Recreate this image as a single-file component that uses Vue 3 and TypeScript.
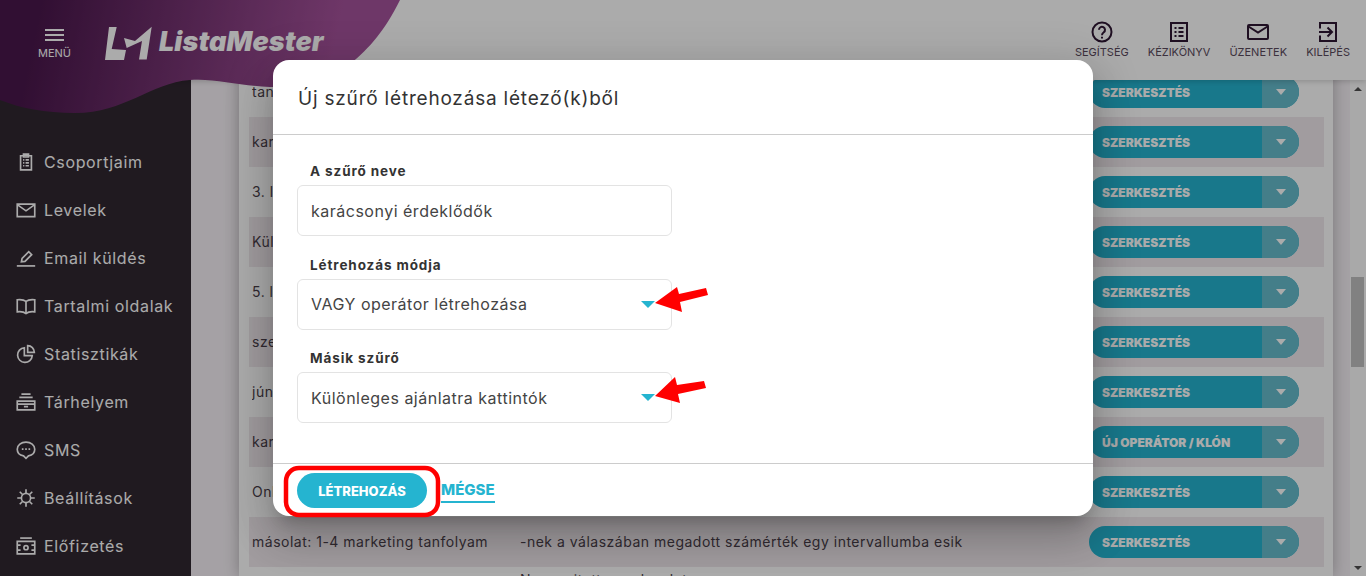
<script setup lang="ts">
interface NavItem { label: string; paths: string[] }
interface Row { name: string; desc: string; action: string; tall?: boolean }

const nav: NavItem[] = [
  { label: 'Csoportjaim', paths: ['M5.500 4.500h13v17h-13z', 'M9 2.500h6v3.500H9z', 'M8.500 9.500h1.500M11.500 9.500h4M8.500 13h1.500M11.500 13h4M8.500 16.500h1.500M11.500 16.500h4'] },
  { label: 'Levelek', paths: ['M1.500 5h21v15h-21z', 'M1.500 5.500L12 13l10.500-7.500'] },
  { label: 'Email küldés', paths: ['M6.500 16.500l.8-4 8-8 3.500 3.500-8 8z', 'M1 21.500h22'] },
  { label: 'Tartalmi oldalak', paths: ['M12 6.500C9.500 4.500 5.500 4 1.500 4.500v14.500C5.500 18.500 9.500 19 12 21c2.500-2 6.500-2.500 10.500-2V4.500C18.500 4 14.500 4.500 12 6.500z', 'M12 6.500V21'] },
  { label: 'Statisztikák', paths: ['M10 4.500a8.800 8.800 0 1 0 9.500 9.500H10z', 'M14 2a8 8 0 0 1 8 8h-8z'] },
  { label: 'Tárhelyem', paths: ['M6.500 2.500h11M4 6.500h16', 'M1.500 11h21v10.500h-21z', 'M1.500 14.500h21M9.500 17.500h5'] },
  { label: 'SMS', paths: ['M12 2.500C6.200 2.500 1.500 6 1.500 11c0 4.500 3.500 7.300 7.500 8l3 3 3-3c4-.700 7.500-3.500 7.500-8 0-5-4.700-8.500-10.500-8.500z', 'M7 11h2M11 11h2M15 11h2'] },
  { label: 'Beállítások', paths: ['M12 6.500a5.500 5.500 0 1 0 0 11 5.500 5.500 0 0 0 0-11z', 'M12 1.500v5M12 17.500v5M1.500 12h5M17.500 12h5M4.500 4.500l3.300 3.300M16.200 16.200l3.300 3.300M19.500 4.500l-3.300 3.300M7.800 16.200l-3.300 3.300'] },
  { label: 'Előfizetés', paths: ['M5 2.500h14', 'M1.500 6.500h21v15h-21z', 'M1.500 11h4M18.500 11h4M1.500 17h4M18.500 17h4', 'M12 11.500a2.500 2.500 0 1 0 0 5 2.500 2.500 0 0 0 0-5z'] }
]

const topLinks: NavItem[] = [
  { label: 'SEGÍTSÉG', paths: ['M12 2.500a9.500 9.500 0 1 0 0 19 9.500 9.500 0 0 0 0-19z', 'M9 9.800a3 3 0 1 1 4.800 2.400c-1.200.9-1.800 1.500-1.800 3', 'M12 16.800v1.800'] },
  { label: 'KÉZIKÖNYV', paths: ['M4 3h16v18H4z', 'M7.500 8h2M11.500 8h5M7.500 12h2M11.500 12h5M7.500 16h2M11.500 16h5'] },
  { label: 'ÜZENETEK', paths: ['M3 5h18a1 1 0 0 1 1 1v12a1 1 0 0 1-1 1H3a1 1 0 0 1-1-1V6a1 1 0 0 1 1-1z', 'M2.500 6.500L12 12.500l9.500-6'] },
  { label: 'KILÉPÉS', paths: ['M4 8.500V3h16v18H4v-5.500', 'M3 12h12', 'M11.500 7.500L16 12l-4.500 4.500'] }
]

const rows: Row[] = [
  { name: 'tanfolyam érdeklődők', desc: 'Feliratkozott a tanfolyam listára', action: 'SZERKESZTÉS' },
  { name: 'karácsonyi vásárlók', desc: 'Vásárolt a karácsonyi akcióban', action: 'SZERKESZTÉS' },
  { name: '3. levél megnyitók', desc: 'Megnyitotta a harmadik levelet', action: 'SZERKESZTÉS' },
  { name: 'Különleges ajánlat', desc: 'Rákattintott a különleges ajánlatra', action: 'SZERKESZTÉS' },
  { name: '5. levél megnyitók', desc: 'Megnyitotta az ötödik levelet', action: 'SZERKESZTÉS' },
  { name: 'szeptemberi lista', desc: 'Szeptemberben iratkozott fel', action: 'SZERKESZTÉS' },
  { name: 'júniusi lista', desc: 'Júniusban iratkozott fel', action: 'SZERKESZTÉS' },
  { name: 'karácsonyi érdeklődők', desc: 'VAGY operátor', action: 'ÚJ OPERÁTOR / KLÓN' },
  { name: 'Online vásárlók', desc: 'Vásárolt a webáruházban', action: 'SZERKESZTÉS' },
  { name: 'másolat: 1-4 marketing tanfolyam', desc: '-nek a válaszában megadott számérték egy intervallumba esik', action: 'SZERKESZTÉS' },
  { name: 'másolat: 5-8 marketing tanfolyam', desc: 'Nem nyitott meg levelet', action: 'SZERKESZTÉS', tall: true }
]

const fields = [
  { label: 'A szűrő neve', value: 'karácsonyi érdeklődők', select: false },
  { label: 'Létrehozás módja', value: 'VAGY operátor létrehozása', select: true },
  { label: 'Másik szűrő', value: 'Különleges ajánlatra kattintók', select: true }
]
</script>

<template>
  <div class="page">
    <aside class="sidebar">
      <nav class="nav">
        <a v-for="item in nav" :key="item.label" class="nav-item">
          <svg class="nav-icon" viewBox="0 0 24 24" fill="none" stroke="currentColor" stroke-width="2">
            <path v-for="d in item.paths" :key="d" :d="d" />
          </svg>
          <span>{{ item.label }}</span>
        </a>
      </nav>
    </aside>

    <main class="main">
      <section class="card">
        <div v-for="(row, i) in rows" :key="i" class="row" :class="{ shaded: i % 2 === 1, tall: row.tall }">
          <span class="cell-name">{{ row.name }}</span>
          <span class="cell-desc">{{ row.desc }}</span>
          <span class="split">
            <span class="split-main">{{ row.action }}</span>
            <span class="split-arrow"><i class="tri tri-white"></i></span>
          </span>
        </div>
      </section>
    </main>

    <div class="scrollbar">
      <i class="sb-up"></i>
      <i class="sb-thumb"></i>
      <i class="sb-down"></i>
    </div>

    <header class="topbar">
      <svg class="blob" viewBox="0 0 400 114" width="400" height="114">
        <defs>
          <linearGradient id="blobfill" x1="40" y1="10" x2="330" y2="70" gradientUnits="userSpaceOnUse">
            <stop offset="0" stop-color="#4a174c" />
            <stop offset="1" stop-color="#a5529b" />
          </linearGradient>
        </defs>
        <path fill="url(#blobfill)" d="M0 0H400C385 30 370 48 350 64C330 80 300 88 270 87C240 86 215 78 190 80C150 83 125 113 75 113C45 113 20 108 0 100Z" />
      </svg>
      <div class="brand">
        <button class="burger">
          <i></i><i></i><i></i>
          <span>MENÜ</span>
        </button>
        <svg class="mark" viewBox="0 0 47 34" width="47" height="34">
          <path fill="#fff" d="M4 1h7.700L6.700 23 21 24l-2 10H0z" />
          <path fill="#fff" d="M19 12l11 3L46.700 0.700 41.700 33.500H34L37 15l-15.300 7z" />
        </svg>
        <span class="wordmark">ListaMester</span>
      </div>
      <div class="toplinks">
        <a v-for="link in topLinks" :key="link.label" class="toplink">
          <svg viewBox="0 0 24 24" width="24" height="24" fill="none" stroke="currentColor" stroke-width="2">
            <path v-for="d in link.paths" :key="d" :d="d" />
          </svg>
          <span>{{ link.label }}</span>
        </a>
      </div>
    </header>

    <div class="overlay">
      <div class="modal">
        <h2 class="modal-title">Új szűrő létrehozása létező(k)ből</h2>
        <div class="modal-body">
          <div v-for="field in fields" :key="field.label" class="field">
            <label class="field-label">{{ field.label }}</label>
            <div class="field-box">
              <span>{{ field.value }}</span>
              <i v-if="field.select" class="tri tri-teal"></i>
            </div>
          </div>
        </div>
        <div class="modal-foot">
          <button class="primary">LÉTREHOZÁS</button>
          <a class="cancel">MÉGSE</a>
        </div>
      </div>
      <svg class="annotations" viewBox="0 0 1366 576" width="1366" height="576">
        <path fill="#f00" d="M655 303L677 287L679 294L706 288L708 295L680 302L682 312Z" />
        <path fill="#f00" d="M655 396L675 377L677 385L704 381L706 388L678 394L680 403Z" />
        <rect x="286" y="468" width="152" height="47" rx="13" fill="none" stroke="#f00" stroke-width="4.500" />
      </svg>
    </div>
  </div>
</template>

<style>
html, body { margin: 0; overflow: hidden; }
</style>

<style scoped>
.page {
  position: relative;
  display: flex;
  width: 1366px;
  height: 576px;
  overflow: hidden;
  font-family: "Inter", "Open Sans", sans-serif;
  background: #f6f1f6;
}
.sidebar {
  flex: none;
  width: 191px;
  background: #312731;
  color: #fff;
  padding-top: 138px;
  box-sizing: border-box;
}
.nav { display: flex; flex-direction: column; }
.nav-item {
  display: flex;
  align-items: center;
  gap: 8px;
  height: 48px;
  padding-left: 16px;
  font-size: 16px;
  letter-spacing: 0.65px;
}
.nav-icon { width: 20px; height: 20px; flex: none; }

.main {
  flex: 1;
  min-width: 0;
  padding-left: 48px;
  padding-right: 33px;
}
.card {
  background: #fff;
  box-shadow: 0 0 14px rgba(0, 0, 0, 0.28);
  padding: 67px 9px 0 10px;
  height: 100%;
  box-sizing: border-box;
  overflow: hidden;
}
.row {
  display: flex;
  align-items: center;
  height: 50px;
  padding-left: 3px;
  font-size: 14px;
  letter-spacing: 0.5px;
  color: #4a3f4a;
  white-space: nowrap;
}
.row.shaded { background: #f1e9ee; }
.row.tall { height: 110px; }
.row.tall .cell-desc { align-self: flex-start; padding-top: 4px; }
.cell-name { width: 268px; overflow: hidden; padding-bottom: 2px; }
.cell-desc { flex: 1; min-width: 0; overflow: hidden; padding-bottom: 2px; }
.split {
  flex: none;
  display: flex;
  width: 210px;
  height: 32px;
  margin-right: 25px;
  border-radius: 16px;
  overflow: hidden;
  background: #25b4d0;
  color: #fff;
  font-size: 12px;
  font-weight: 900;
  letter-spacing: 0;
}
.split-main {
  flex: 1;
  display: flex;
  align-items: center;
  padding-left: 13px;
}
.split-arrow {
  flex: none;
  width: 37px;
  display: flex;
  align-items: center;
  justify-content: center;
  background: #66bccd;
}
.tri {
  display: block;
  width: 0;
  height: 0;
  border-style: solid;
  border-color: transparent;
  border-bottom-width: 0;
}
.tri-white {
  border-width: 6px 5px 0;
  border-top-color: #fff;
}
.tri-teal {
  border-width: 7px 7px 0;
  border-top-color: #25b4d0;
}

.scrollbar {
  position: absolute;
  right: 0;
  top: 80px;
  bottom: 0;
  width: 16px;
  background: #fcfcfc;
}
.sb-thumb {
  position: absolute;
  left: 1px;
  right: 2px;
  top: 197px;
  height: 90px;
  background: #c1c1c1;
}
.sb-up, .sb-down {
  position: absolute;
  left: 4px;
  width: 0;
  height: 0;
  border-style: solid;
  border-color: transparent;
}
.sb-up { top: 7px; border-width: 0 4px 4px; border-bottom-color: #505050; }
.sb-down { bottom: 6px; border-width: 4px 4px 0; border-top-color: #505050; }

.topbar {
  position: absolute;
  left: 0;
  top: 0;
  right: 0;
  height: 80px;
  display: flex;
  justify-content: space-between;
  background: #fff;
  box-shadow: 0 1px 6px rgba(0, 0, 0, 0.2);
}
.blob { position: absolute; left: 0; top: 0; }
.brand {
  position: relative;
  display: flex;
  align-items: flex-start;
  padding: 25px 0 0 38px;
  color: #fff;
}
.burger {
  width: 33px;
  padding: 4px 0 0;
  border: 0;
  background: none;
  color: #fff;
  font: inherit;
  font-size: 11px;
  line-height: 14px;
  text-align: center;
  display: flex;
  flex-direction: column;
  align-items: center;
  gap: 3px;
}
.burger i { display: block; width: 19px; height: 2px; background: #fff; }
.burger span { margin-top: 2px; }
.mark { margin: 1px 0 0 34px; }
.wordmark {
  margin: 2px 0 0 7px;
  font-size: 27px;
  line-height: 30px;
  font-weight: 900;
  font-style: italic;
  letter-spacing: 0.1px;
}
.toplinks {
  position: relative;
  display: flex;
  gap: 19px;
  padding: 20px 16px 0 0;
}
.toplink {
  display: flex;
  flex-direction: column;
  align-items: center;
  font-size: 11px;
  line-height: 14px;
  gap: 1px;
  color: #5a4a5c;
}
.toplink svg { color: #2f1733; }

.overlay {
  position: absolute;
  inset: 0;
  background: rgba(0, 0, 0, 0.33);
}
.modal {
  position: absolute;
  left: 273px;
  top: 60px;
  width: 820px;
  height: 456px;
  display: flex;
  flex-direction: column;
  background: #fff;
  border-radius: 16px;
  overflow: hidden;
  box-shadow: 0 11px 15px -7px rgba(0, 0, 0, 0.2), 0 24px 38px 3px rgba(0, 0, 0, 0.14), 0 9px 46px 8px rgba(0, 0, 0, 0.12);
}
.modal-title {
  flex: none;
  margin: 0;
  height: 75px;
  box-sizing: border-box;
  padding: 26px 25px 0;
  border-bottom: 1px solid #ccc;
  font-size: 19px;
  letter-spacing: 0.8px;
  line-height: 26px;
  font-weight: 400;
  color: #333;
}
.modal-body {
  flex: 1;
  padding: 28px 24px 0;
  display: flex;
  flex-direction: column;
  gap: 20.500px;
}
.field-label {
  display: block;
  height: 22px;
  padding-left: 13px;
  font-size: 13.500px;
  letter-spacing: 0.9px;
  line-height: 17px;
  font-weight: 700;
  color: #333;
}
.field-box {
  width: 375px;
  height: 51px;
  box-sizing: border-box;
  padding: 0 16px 0 13px;
  display: flex;
  align-items: center;
  justify-content: space-between;
  border: 1px solid #e3e3e3;
  border-radius: 6px;
  font-size: 16px;
  letter-spacing: 0.5px;
  color: #444;
}
.modal-foot {
  flex: none;
  height: 53px;
  box-sizing: border-box;
  padding: 9px 24px 0;
  border-top: 1px solid #ccc;
  display: flex;
  align-items: flex-start;
}
.primary {
  width: 130px;
  height: 35px;
  border: 0;
  border-radius: 18px;
  background: #25b4d0;
  color: #fff;
  font: inherit;
  font-size: 13px;
  font-weight: 800;
}
.cancel {
  margin: 7px 0 0 14px;
  padding-bottom: 2px;
  border-bottom: 2px solid #25b4d0;
  color: #25b4d0;
  font-size: 15px;
  line-height: 19px;
  font-weight: 800;
}
.annotations { position: absolute; left: 0; top: 0; pointer-events: none; }
</style>
